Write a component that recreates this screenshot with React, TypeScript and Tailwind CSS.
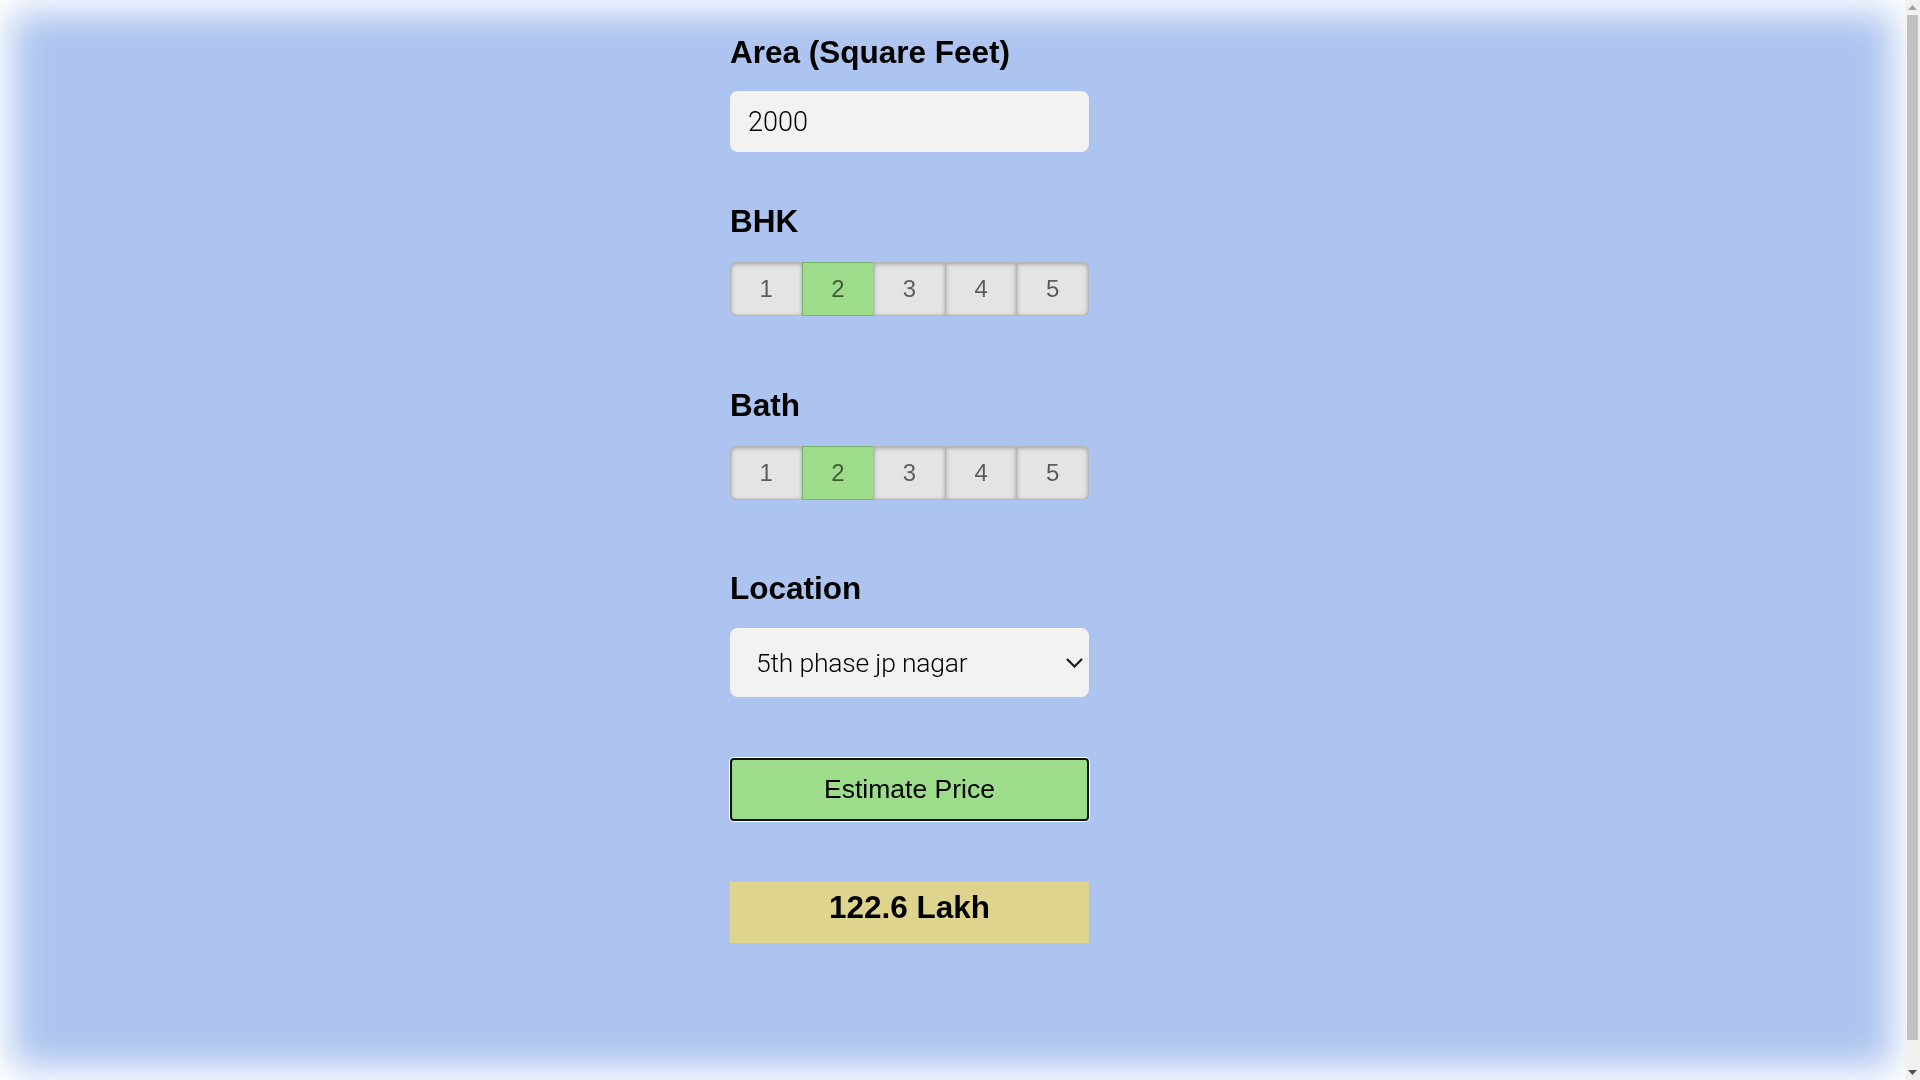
import React, { useState } from 'react';

const OPTIONS = [1, 2, 3, 4, 5];

// segmented radio row, same look for BHK and Bath
function SwitchField({ value, onChange }: { value: number; onChange: (v: number) => void }) {
  return (
    <div className="flex h-[54px] w-[359px]">
      {OPTIONS.map((n, i) => {
        const active = n === value;
        return (
          <button
            key={n}
            onClick={() => onChange(n)}
            className={`flex-1 flex items-center justify-center border border-black/20 text-[24px] leading-none text-black/60
              ${i > 0 ? '-ml-px' : ''}
              ${i === 0 ? 'rounded-l-[6px]' : ''}
              ${i === OPTIONS.length - 1 ? 'rounded-r-[6px]' : ''}
              ${active ? 'bg-[#9cdc8b]' : 'bg-[#e4e4e4] shadow-[inset_0_1px_4px_rgba(0,0,0,0.3)]'}`}
          >
            {n}
          </button>
        );
      })}
    </div>
  );
}

function Label({ children, className = '' }: { children: React.ReactNode; className?: string }) {
  return <h2 className={`text-[31.5px] font-bold leading-[40px] text-black ${className}`}>{children}</h2>;
}

// classic browser scrollbar, page is scrolled to the top
function FakeScrollbar() {
  return (
    <div className="fixed right-0 top-0 z-20 flex h-screen w-[15px] flex-col bg-[#f1f1f1]">
      <div className="flex h-[15px] items-center justify-center">
        <svg width="9" height="5" viewBox="0 0 9 5"><path d="M0 5 L4.5 0 L9 5 Z" fill="#a3a3a3" /></svg>
      </div>
      <div className="flex-1 px-[2px]">
        <div className="h-[1025px] w-full bg-[#c1c1c1]" />
      </div>
      <div className="flex h-[15px] items-center justify-center">
        <svg width="9" height="5" viewBox="0 0 9 5"><path d="M0 0 L9 0 L4.5 5 Z" fill="#505050" /></svg>
      </div>
    </div>
  );
}

export default function App() {
  const [area, setArea] = useState('2000');
  const [bhk, setBhk] = useState(2);
  const [bath, setBath] = useState(2);
  const [location, setLocation] = useState('5th phase jp nagar');

  return (
    <div className="relative pr-[15px] font-['Liberation_Sans',Arial,sans-serif]">
      <div className="fixed bottom-[12px] left-[12px] right-[27px] top-[12px] -z-10 bg-[#acc4ef] blur-[18px]" />
      <FakeScrollbar />

      <div className="mx-auto w-[499px] pl-[27px] pt-[32px] pb-[163px]">
        <Label>Area (Square Feet)</Label>
        <input
          value={area}
          onChange={(e) => setArea(e.target.value)}
          className="mt-[19px] block h-[61px] w-[359px] rounded-[8px] bg-[#f2f2f2] px-[18px] font-['Roboto',sans-serif] text-[27px] font-light text-black outline-none"
        />

        <Label className="mt-[49px]">BHK</Label>
        <div className="mt-[21px]">
          <SwitchField value={bhk} onChange={setBhk} />
        </div>

        <Label className="mt-[69px]">Bath</Label>
        <div className="mt-[21px]">
          <SwitchField value={bath} onChange={setBath} />
        </div>

        <Label className="mt-[68px]">Location</Label>
        <div className="relative mt-[20px] h-[69px] w-[359px]">
          <select
            value={location}
            onChange={(e) => setLocation(e.target.value)}
            className="block h-full w-full appearance-none rounded-[8px] bg-[#f2f2f2] pl-[26px] pr-[40px] font-['Roboto',sans-serif] text-[26.5px] font-light tracking-[-0.2px] text-black outline-none"
          >
            <option>5th phase jp nagar</option>
            <option>1st phase jp nagar</option>
            <option>electronic city</option>
            <option>whitefield</option>
          </select>
          <svg
            className="pointer-events-none absolute right-[6px] top-[30px]"
            width="17"
            height="10"
            viewBox="0 0 17 10"
          >
            <path d="M1 1 L8.5 8.5 L16 1" fill="none" stroke="#1a1a1a" strokeWidth="2.2" />
          </svg>
        </div>

        <button className="mt-[61px] block h-[63px] w-[359px] rounded-[4px] border-2 border-[#101010] bg-[#9cdc8b] text-[26.5px] text-black shadow-[0_0_0_1px_#ffffff]">
          Estimate Price
        </button>

        <div className="mt-[61px] h-[61px] w-[359px] bg-[#dfd48e] pt-[5px] text-center">
          <h2 className="text-[31.5px] font-bold leading-[40px] text-black">122.6 Lakh</h2>
        </div>
      </div>
    </div>
  );
}
